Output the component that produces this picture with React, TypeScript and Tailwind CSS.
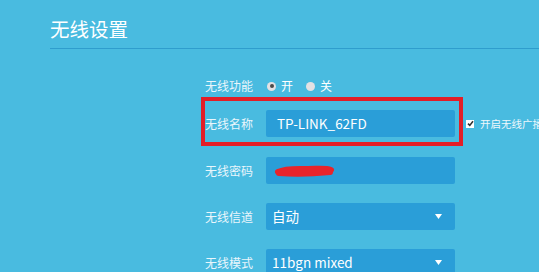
import { ReactNode } from 'react';

const font = { fontFamily: '"Noto Sans CJK SC", "Noto Sans", sans-serif' };

function Label({ children }: { children: ReactNode }) {
  return (
    <div className="w-[60px] shrink-0 text-right text-[12px] leading-none text-[#e9f6fc] whitespace-nowrap">
      {children}
    </div>
  );
}

function Radio({ checked, label }: { checked?: boolean; label: string }) {
  return (
    <div className="flex items-center gap-[5px]">
      <span className="flex h-[9px] w-[9px] items-center justify-center rounded-full bg-[#e4e1e3]">
        {checked && <span className="h-[4px] w-[4px] rounded-full bg-[#4a4a4a]" />}
      </span>
      <span className="text-[12px] leading-none text-white">{label}</span>
    </div>
  );
}

function Select({ value }: { value: string }) {
  return (
    <div className="flex h-[27px] w-[189px] shrink-0 items-center justify-between rounded-[2px] bg-[#2a9ed8] pl-[6px] pr-[13px]">
      <span className="text-[13.5px] text-white">{value}</span>
      <svg width="7" height="5" viewBox="0 0 7 5">
        <path d="M0 0 H7 L3.5 5 Z" fill="#ffffff" />
      </svg>
    </div>
  );
}

export default function App() {
  return (
    <div className="h-[272px] w-full overflow-hidden bg-[#49bbe0]" style={font}>
      <div className="pl-[50px] pt-[15px]">
        <h1 className="h-[33px] text-[19.5px] leading-[28px] text-white">无线设置</h1>
        <div className="h-px bg-[#2f9dcd]" />
      </div>

      <div className="ml-[193px] flex flex-col">
        {/* 无线功能 */}
        <div className="mt-[25px] flex h-[24px] items-center gap-[14px]">
          <Label>无线功能</Label>
          <div className="flex items-center gap-[13px]">
            <Radio checked label="开" />
            <Radio label="关" />
          </div>
        </div>

        {/* 无线名称 */}
        <div className="relative mt-[12px] flex h-[27px] items-center gap-[13px]">
          <Label>无线名称</Label>
          <div className="flex h-[27px] w-[189px] shrink-0 items-center rounded-[2px] bg-[#2a9ed8] pl-[11px]">
            <span className="text-[13.5px] text-white">TP-LINK_62FD</span>
          </div>
          <div className="ml-[-2px] flex shrink-0 items-center gap-[6px] whitespace-nowrap">
            <span className="flex h-[8px] w-[8px] shrink-0 items-center justify-center bg-white">
              <svg width="7" height="7" viewBox="0 0 7 7">
                <path d="M1 3.6 L2.8 5.4 L6 1.2" stroke="#333" strokeWidth="1.6" fill="none" />
              </svg>
            </span>
            <span className="text-[10.5px] text-[#eef8fc]">开启无线广播</span>
          </div>
          <div className="pointer-events-none absolute left-[8px] top-[-13px] h-[49px] w-[262px] border-[4px] border-[#e31e27]" />
        </div>

        {/* 无线密码 */}
        <div className="mt-[20px] flex h-[27px] items-center gap-[13px]">
          <Label>无线密码</Label>
          <div className="flex h-[27px] w-[189px] shrink-0 items-center rounded-[2px] bg-[#2a9ed8] pl-[8px]">
            <svg width="62" height="14" viewBox="0 0 62 14">
              <path
                d="M4 8 C12 4, 24 5, 34 5 S52 4, 57 6 M5 9 C18 10, 36 10, 56 8"
                stroke="#e8242b"
                strokeWidth="6"
                strokeLinecap="round"
                fill="none"
              />
            </svg>
          </div>
        </div>

        {/* 无线信道 */}
        <div className="mt-[19px] flex h-[27px] items-center gap-[13px]">
          <Label>无线信道</Label>
          <Select value="自动" />
        </div>

        {/* 无线模式 */}
        <div className="mt-[19px] flex h-[27px] items-center gap-[13px]">
          <Label>无线模式</Label>
          <Select value="11bgn mixed" />
        </div>
      </div>
    </div>
  );
}
